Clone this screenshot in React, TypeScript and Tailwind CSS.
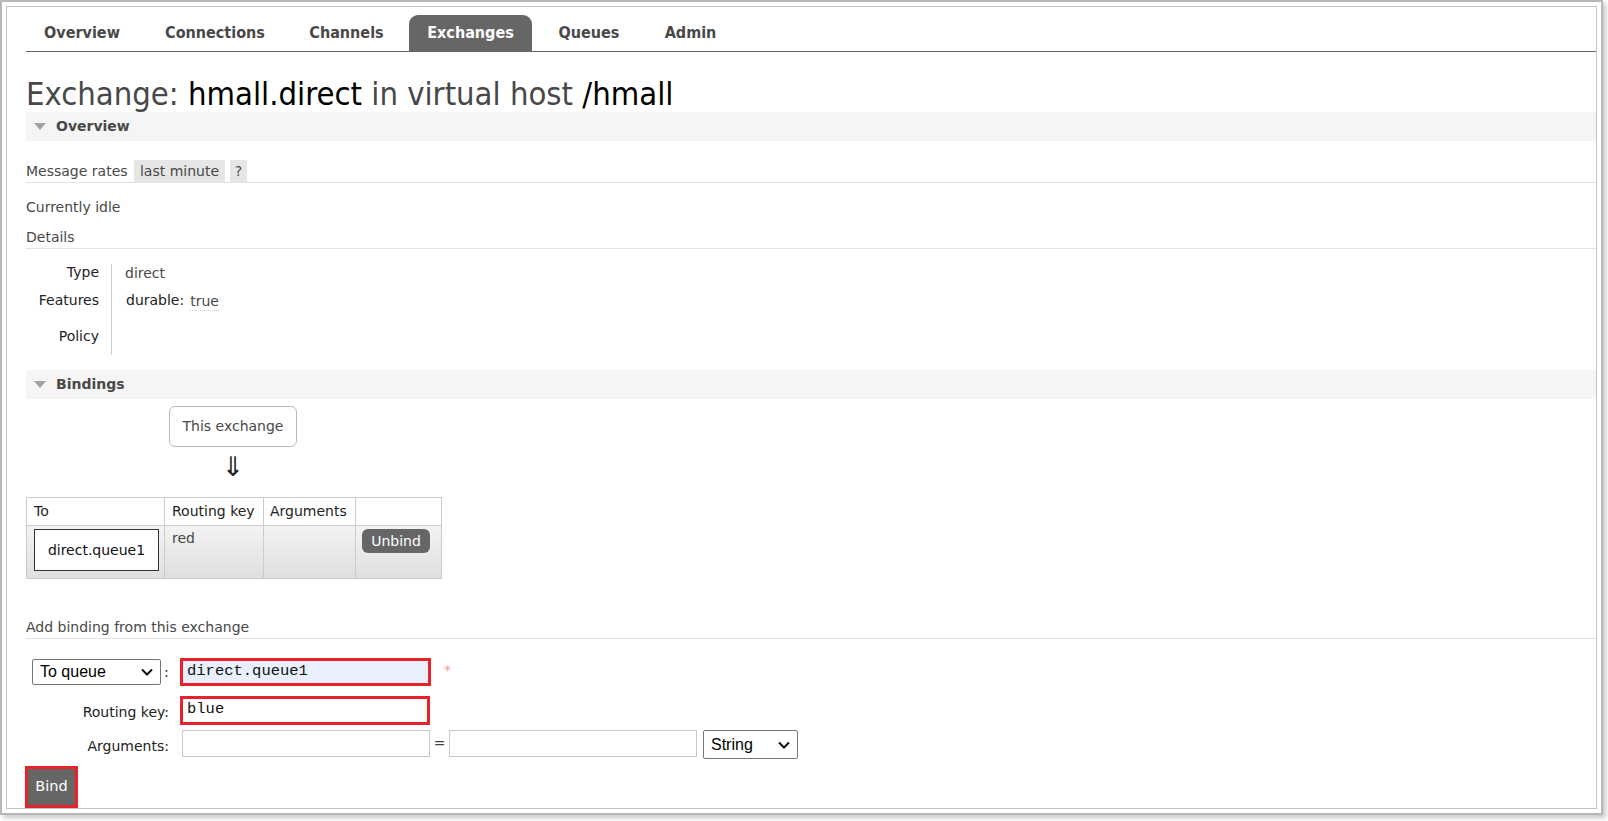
import React from "react";

const RED = "border-[#e9212a]";

function SectionBar({ title }: { title: string }) {
  return (
    <div className="h-[29px] bg-[#f5f5f5] flex items-center">
      <svg width="12" height="7" viewBox="0 0 12 7" className="ml-[8px]">
        <polygon points="0,0 12,0 6,7" fill="#a3a3a3" />
      </svg>
      <span className="ml-[10px] font-bold text-[14px] text-[#484848]">{title}</span>
    </div>
  );
}

function Chevron() {
  return (
    <svg width="12" height="8" viewBox="0 0 12 8">
      <polyline points="1,1.5 6,6.5 11,1.5" fill="none" stroke="#111" strokeWidth="2" />
    </svg>
  );
}

const tabs: { label: string; w: string; active?: boolean }[] = [
  { label: "Overview", w: "w-[112px]" },
  { label: "Connections", w: "w-[154px]" },
  { label: "Channels", w: "w-[109px] mr-[8px]" },
  { label: "Exchanges", w: "w-[123px]", active: true },
  { label: "Queues", w: "w-[114px]" },
  { label: "Admin", w: "w-[89px]" },
];

export default function App() {
  return (
    <div className="w-[1608px] h-[821px] bg-white overflow-hidden font-['DejaVu_Sans',Verdana,sans-serif] text-[14px] text-[#484848]">
      <div className="w-[1603px] h-[815px] border-2 border-[#b8b8b8] p-[4px] shadow-[3px_3px_5px_rgba(0,0,0,0.22)]">
        <div className="h-full border border-[#c4c4c4] pl-[19px] pt-[8px] flex flex-col">
          {/* Tabs */}
          <div className="h-[37px] border-b border-[#666] flex items-stretch font-['DejaVu_Sans_Condensed','DejaVu_Sans',sans-serif] [font-stretch:condensed] font-bold text-[16px]">
            {tabs.map((t) => (
              <div
                key={t.label}
                className={
                  t.active
                    ? `${t.w} flex items-center justify-center rounded-t-[9px] bg-[#666] text-white`
                    : `${t.w} flex items-center justify-center text-[#484848]`
                }
              >
                {t.label}
              </div>
            ))}
          </div>

          {/* Heading */}
          <h1 className="mt-[24px] h-[36px] leading-[36px] text-[32.5px] font-normal text-[#484848] font-['DejaVu_Sans_Condensed','DejaVu_Sans',sans-serif] [font-stretch:condensed] whitespace-nowrap">
            Exchange: <span className="text-black">hmall.direct</span> in virtual host{" "}
            <span className="text-black">/hmall</span>
          </h1>

          <SectionBar title="Overview" />

          {/* Message rates */}
          <div className="mt-[19px] h-[23px] border-b border-[#e2e2e2] flex items-start">
            <span className="w-[108px] h-[22px] leading-[22px]">Message rates</span>
            <span className="w-[91px] h-[22px] leading-[22px] bg-[#e6e6e6] text-center">last minute</span>
            <span className="ml-[5px] w-[17px] h-[22px] leading-[22px] bg-[#e6e6e6] text-center">?</span>
          </div>

          <div className="mt-[13px] leading-[20px] h-[20px] pt-[1px]">Currently idle</div>

          <div className="mt-[10px] h-[23px] leading-[22px] border-b border-[#e2e2e2]">Details</div>

          {/* Details table */}
          <div className="mt-[15px] flex">
            <div className="w-[86px] border-r border-[#cfcfcf] text-right pr-[12px] text-[#222]">
              <div className="h-[18px] leading-[18px] -mt-[1px]">Type</div>
              <div className="h-[37px] pt-[10px] leading-[18px]">Features</div>
              <div className="h-[36px] pt-[9px] leading-[18px]">Policy</div>
            </div>
            <div className="pl-[13px]">
              <div className="h-[18px] leading-[18px]">direct</div>
              <div className="h-[37px] pt-[9px] leading-[18px] flex items-start">
                <span className="ml-[1px] text-[#222]">durable:</span>
                <span className="ml-[6px] mt-[2px] leading-[17px] border-b border-dotted border-[#ccc]">true</span>
              </div>
              <div className="h-[36px]" />
            </div>
          </div>

          <div className="mt-[15px]">
            <SectionBar title="Bindings" />
          </div>

          {/* This exchange */}
          <div className="ml-[143px] w-[128px]">
            <div className="mt-[7px] h-[41px] border border-[#bbb] rounded-[6px] flex items-center justify-center bg-white">
              This exchange
            </div>
            <div className="h-[36px] leading-[36px] pt-[2px] text-center text-[27px] text-[#222]">⇓</div>
          </div>

          {/* Bindings table */}
          <table className="mt-[14px] border-collapse w-[416px] text-[14px]">
            <thead>
              <tr className="h-[28px]">
                <th className="w-[138px] border border-[#ccc] text-left font-normal pl-[7px] text-[#222]">To</th>
                <th className="w-[99px] border border-[#ccc] text-left font-normal pl-[7px] text-[#222]">Routing key</th>
                <th className="w-[92px] border border-[#ccc] text-left font-normal pl-[6px] text-[#222]">Arguments</th>
                <th className="w-[86px] border border-[#ccc]"></th>
              </tr>
            </thead>
            <tbody>
              <tr className="h-[53px] bg-gradient-to-b from-[#f3f3f3] to-[#dfdfdf]">
                <td className="border border-[#ccc] align-top pt-[3px] pl-[7px] pr-[5px] pb-[6px]">
                  <div className="w-[125px] h-[42px] bg-white border border-[#333] flex items-center justify-center text-[#111]">
                    direct.queue1
                  </div>
                </td>
                <td className="border border-[#ccc] align-top pl-[7px] pt-[2px] leading-[20px]">red</td>
                <td className="border border-[#ccc]"></td>
                <td className="border border-[#ccc] align-top pt-[3px] pl-[6px]">
                  <div className="w-[68px] h-[24px] rounded-[6px] bg-[#666] text-white flex items-center justify-center">
                    Unbind
                  </div>
                </td>
              </tr>
            </tbody>
          </table>

          {/* Add binding */}
          <div className="mt-[37px] h-[23px] leading-[22px] border-b border-[#e2e2e2]">Add binding from this exchange</div>

          <div className="mt-[19px] h-[28px] flex items-center">
            <div className="w-[154px] flex items-center">
              <div className="ml-[6px] w-[129px] h-[26px] border border-[#767676] rounded-[2px] flex items-center justify-between pl-[7px] pr-[7px] font-['Liberation_Sans',Arial,sans-serif] text-[16px] text-black">
                <span>To queue</span>
                <Chevron />
              </div>
              <span className="ml-[3px] text-[#222]">:</span>
            </div>
            <div className={`w-[251px] h-[28px] border-[3px] ${RED} bg-[#e8f0fe] flex items-center pl-[4px] font-['Liberation_Mono','Courier_New',monospace] text-[15.5px] text-[#111]`}>
              direct.queue1
            </div>
            <span className="ml-[13px] -mt-[3px] text-[#f59a9a] text-[14px]">*</span>
          </div>

          <div className="mt-[10px] h-[29px] flex items-center">
            <div className="w-[154px] text-right pr-[11px] text-[#222] pt-[4px]">Routing key:</div>
            <div className={`w-[250px] h-[29px] border-[3px] ${RED} bg-white flex items-center pl-[4px] pb-[2px] font-['Liberation_Mono','Courier_New',monospace] text-[15.5px] text-[#111]`}>
              blue
            </div>
          </div>

          <div className="mt-[5px] h-[29px] flex items-center">
            <div className="w-[154px] text-right pr-[11px] text-[#222] pt-[3px]">Arguments:</div>
            <div className="ml-[2px] w-[248px] h-[27px] border border-[#c8c8c8] bg-white self-start" />
            <span className="w-[19px] text-center text-[#444] self-start leading-[27px]">=</span>
            <div className="w-[248px] h-[27px] border border-[#c8c8c8] bg-white self-start" />
            <div className="ml-[6px] w-[95px] h-[29px] border border-[#767676] rounded-[2px] flex items-center justify-between pl-[7px] pr-[7px] font-['Liberation_Sans',Arial,sans-serif] text-[16px] text-black">
              <span>String</span>
              <Chevron />
            </div>
          </div>

          <div className={`mt-[7px] -ml-[1px] w-[53px] h-[42px] border-[3px] ${RED}`}>
            <div className="w-full h-full bg-[#666] text-white flex items-center justify-center text-[14.5px]">Bind</div>
          </div>
        </div>
      </div>
    </div>
  );
}
